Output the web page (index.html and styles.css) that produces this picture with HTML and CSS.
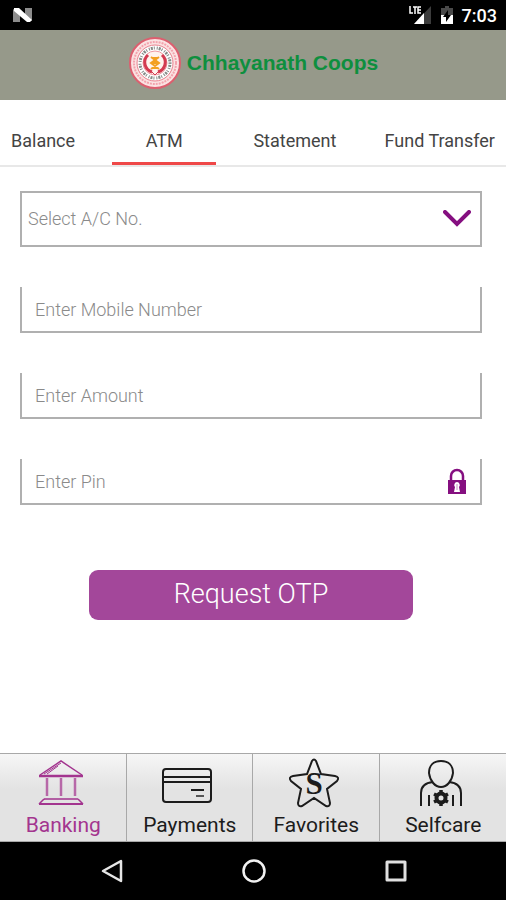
FILE: index.html
```html
<!DOCTYPE html>
<html lang="en">

<head>
    <meta charset="UTF-8">
    <meta name="viewport" content="width=device-width, initial-scale=1.0">
    <title>Chhayanath Coops</title>
    <link rel="stylesheet" href="styles.css">
</head>

<body>
    <div class="container">
        <div class="status">
            <svg width="20" height="16" viewBox="0 0 20 16">
                <path d="M0 2l7 5v8H0zM19 14l-7-5V1h7z" fill="#8c8c8c"/>
                <path d="M1 1h5l13 12-2 2h-3L1 4z" fill="#fff"/>
            </svg>
            <div class="status-right">
                <svg width="24" height="20" viewBox="0 0 24 20">
                    <path d="M23 1v18H6z" fill="#3c3c3c"/>
                    <path d="M16 8v11H6z" fill="#fff"/>
                    <path d="M2 1v7h3M5 2h4M7 2v7M13 2h-3v6h3M10 5h3" fill="none" stroke="#fff" stroke-width="1.5"/>
                </svg>
                <svg width="12" height="20" viewBox="0 0 12 20">
                    <path d="M4 1h4v2h4v8H0V3h4z" fill="#4a4a4a"/>
                    <path d="M0 10h12v9H0z" fill="#fff"/>
                    <path d="M7 5l-5 7h3v5l5-7H7z" fill="#000"/>
                </svg>
                <span class="clock">7:03</span>
            </div>
        </div>

        <header class="header">
            <svg class="logo" width="54" height="54" viewBox="0 0 54 54">
                <circle cx="27" cy="27" r="25" fill="#fbe3e3" stroke="#dc5f6f" stroke-width="2"/>
                <circle cx="27" cy="27" r="21" fill="none" stroke="#f3a3ad" stroke-width="2" stroke-dasharray="2 1"/>
                <circle cx="27" cy="27" r="18" fill="#fff" stroke="#e9808d" stroke-width="1"/>
                <circle cx="27" cy="27" r="15" fill="none" stroke="#848a87" stroke-width="3" stroke-dasharray="1 1 2 1 1 2"/>
                <circle cx="27" cy="27" r="12" fill="#fff3ee" stroke="#ee9aa4" stroke-width="1"/>
                <path d="M20 19a10 10 0 0 0 4 17M34 19a10 10 0 0 1-4 17" fill="none" stroke="#d33a50" stroke-width="3"/>
                <path d="M23 21l8 6-8 6M31 21l-8 6 8 6M24 22h6M23 27h8M24 32h6" fill="none" stroke="#f3a021" stroke-width="2"/>
                <path d="M24 36l3 3 3-3" fill="none" stroke="#d33a50" stroke-width="1"/>
            </svg>
            <h1 class="title">Chhayanath Coops</h1>
        </header>

        <nav class="tabs">
            <a class="tab" href="#balance">Balance</a>
            <a class="tab active" href="#atm">ATM</a>
            <a class="tab" href="#statement">Statement</a>
            <a class="tab" href="#transfer">Fund Transfer</a>
        </nav>

        <main class="content">
            <form class="form">
                <div class="field field-select">
                    <select aria-label="Select A/C No.">
                        <option>Select A/C No.</option>
                    </select>
                    <svg class="arrow" width="28" height="18" viewBox="0 0 28 18">
                        <path d="M2 2l12 12L26 2" fill="none" stroke="#850f80" stroke-width="4" stroke-linecap="round"/>
                    </svg>
                </div>
                <div class="field">
                    <input type="tel" placeholder="Enter Mobile Number" aria-label="Enter Mobile Number">
                </div>
                <div class="field">
                    <input type="text" placeholder="Enter Amount" aria-label="Enter Amount">
                </div>
                <div class="field">
                    <input type="password" placeholder="Enter Pin" aria-label="Enter Pin">
                    <svg width="18" height="26" viewBox="0 0 18 26">
                        <path d="M3 13V8a6 6 0 0 1 12 0v5" fill="none" stroke="#850f80" stroke-width="2.5"/>
                        <path d="M0 12h18v14H0z" fill="#850f80"/>
                        <path d="M9 14a3 3 0 0 0-2 5l-1 5h6l-1-5a3 3 0 0 0-2-5z" fill="#fff"/>
                        <path d="M9 16v6" stroke="#c68ac3" stroke-width="1"/>
                    </svg>
                </div>
                <button class="otp-btn" type="button">Request OTP</button>
            </form>
        </main>

        <nav class="menu">
            <a class="menu-item current" href="#banking">
                <svg width="50" height="50" viewBox="0 0 50 50" fill="none" stroke="currentColor">
                    <path d="M4 17L25 3l21 14" stroke-width="1.5"/>
                    <path d="M3 18h44" stroke-width="2.5"/>
                    <path d="M8 16L25 5M11 16l11-8" stroke-width="1"/>
                    <path d="M11 20v18M25 20v18M39 20v18" stroke-width="2.5" stroke="#b768a8"/>
                    <path d="M8 41h34M8 41l-5 5M42 41l5 5" stroke-width="1.5"/>
                    <path d="M3 46h44" stroke-width="2"/>
                </svg>
                <span>Banking</span>
            </a>
            <a class="menu-item" href="#payments">
                <svg width="50" height="50" viewBox="0 0 50 50" fill="none" stroke="currentColor" stroke-width="2">
                    <rect x="1" y="11" width="48" height="33" rx="3"/>
                    <path d="M1 19h48M1 24h48"/>
                    <path d="M29 32h13"/>
                    <path d="M34 38h8" stroke="#555"/>
                </svg>
                <span>Payments</span>
            </a>
            <a class="menu-item" href="#favorites">
                <svg width="50" height="50" viewBox="0 0 50 50">
                    <path d="M23 3Q25 0 27 3L32 16L46 18Q51 19 48 23L38 31L41 45Q41 49 37 48L25 40L13 48Q9 49 9 45L12 31L2 23Q-1 19 4 18L18 16Z" fill="none" stroke="currentColor" stroke-width="2"/>
                    <text class="star-letter" x="25" y="36" text-anchor="middle" fill="currentColor">S</text>
                </svg>
                <span>Favorites</span>
            </a>
            <a class="menu-item" href="#selfcare">
                <svg width="50" height="50" viewBox="0 0 50 50" fill="none" stroke="currentColor" stroke-width="2">
                    <path d="M25 3C17 3 13 8 13 15C14 23 19 29 25 29C31 29 36 23 37 15C37 8 33 3 25 3Z"/>
                    <path d="M17 24C8 25 5 29 5 35V48M33 24C42 25 45 29 45 35V48"/>
                    <path d="M13 37v11M37 37v11"/>
                    <circle cx="25" cy="40" r="4.5" stroke-width="4"/>
                    <path d="M25 32v4M25 44v4M18 36l4 2M28 42l4 2M18 44l4-2M28 38l4-2" stroke-width="3.5"/>
                </svg>
                <span>Selfcare</span>
            </a>
        </nav>

        <div class="softkeys">
            <button type="button" aria-label="Back">
                <svg width="24" height="26" viewBox="0 0 24 26">
                    <path d="M21 3v20L3 13z" fill="none" stroke="#e6e6e6" stroke-width="2.5" stroke-linejoin="round"/>
                </svg>
            </button>
            <button type="button" aria-label="Home">
                <svg width="24" height="24" viewBox="0 0 24 24">
                    <circle cx="12" cy="12" r="10.5" fill="none" stroke="#f2f2f2" stroke-width="2.5"/>
                </svg>
            </button>
            <button type="button" aria-label="Recent apps">
                <svg width="22" height="22" viewBox="0 0 22 22">
                    <rect x="2" y="2" width="18" height="18" fill="none" stroke="#e0e0e0" stroke-width="3" stroke-linejoin="round"/>
                </svg>
            </button>
        </div>
    </div>
</body>

</html>
```

FILE: styles.css
```css
* {
    box-sizing: border-box;
}
body{
    margin: 0;
    font-family: Roboto, "Liberation Sans", sans-serif;
    background-color: #fff;
}
a{
    color: inherit;
    text-decoration: none;
}
svg{
    display: block;
    flex-shrink: 0;
}
.container{
    min-height: 100vh;
    display: flex;
    flex-direction: column;
}

/* status bar */
.status{
    height: 30px;
    padding: 0 9px 0 13px;
    background-color: #000;
    display: flex;
    justify-content: space-between;
    align-items: center;
}
.status-right{
    display: flex;
    align-items: center;
    gap: 9px;
}
.clock{
    color: #fff;
    font-size: 18px;
    font-weight: 500;
}

.header{
    height: 70px;
    padding-bottom: 5px;
    background-color: #96998a;
    display: flex;
    justify-content: center;
    align-items: center;
    gap: 5px;
}
.title{
    margin: 0;
    color: #0e8f3e;
    font-family: "Liberation Sans", Arial, sans-serif;
    font-size: 21px;
    font-weight: bold;
}

/* tabs */
.tabs{
    height: 67px;
    border-bottom: 2px solid #e8e8e8;
    display: flex;
    justify-content: space-between;
}
.tab{
    padding: 18px 11px 0;
    border-bottom: 3px solid transparent;
    color: #444;
    font-size: 18px;
    display: flex;
    justify-content: center;
    align-items: center;
}
.tab.active{
    min-width: 104px;
    border-bottom-color: #ef4848;
}

/* form */
.content{
    flex: 1;
    padding: 24px 24px 24px 20px;
}
.form{
    display: flex;
    flex-direction: column;
    gap: 40px;
}
.field{
    height: 46px;
    padding: 0 14px 0 13px;
    border: 2px solid #b0b0b0;
    border-top: none;
    display: flex;
    align-items: center;
    position: relative;
}
.field input,
.field select{
    width: 100%;
    height: 100%;
    padding: 0;
    border: none;
    outline: none;
    background: none;
    color: #8a8a8a;
    font-family: inherit;
    font-size: 18px;
    font-weight: 300;
}
.field input::placeholder{
    color: #8a8a8a;
    opacity: 1;
}
.field-select{
    height: 56px;
    padding: 0;
    border-top: 2px solid #b0b0b0;
}
.field select{
    padding: 0 48px 2px 6px;
    appearance: none;
}
.arrow{
    position: absolute;
    right: 9px;
    pointer-events: none;
}
.otp-btn{
    width: 70%;
    height: 50px;
    margin: 25px auto 0;
    padding: 0 0 2px;
    border: none;
    border-radius: 9px;
    background-color: #a3479a;
    color: #fff;
    font-family: inherit;
    font-size: 27px;
    font-weight: 300;
    cursor: pointer;
}

/* bottom menu */
.menu{
    height: 89px;
    border-top: 1px solid #a8a8a8;
    border-bottom: 1px solid #a8a8a8;
    background: linear-gradient(#f6f6f6, #e3e3e3 40%, #e3e3e3);
    display: grid;
    grid-template-columns: repeat(4, 1fr);
}
.menu-item{
    padding: 4px 4px 0 0;
    border-right: 1px solid #a8a8a8;
    color: #1c1c1c;
    font-size: 21px;
    line-height: 24px;
    display: flex;
    flex-direction: column;
    align-items: center;
    gap: 5px;
}
.menu-item:last-child{
    border-right: none;
}
.menu-item.current{
    color: #a3358f;
}
.menu-item span{
    padding-left: 5px;
}
.star-letter{
    font-family: "Liberation Serif", serif;
    font-size: 31px;
    font-weight: bold;
}

.softkeys{
    height: 58px;
    padding: 0 39px 0 41px;
    background-color: #000;
    display: grid;
    grid-template-columns: repeat(3, 1fr);
    align-items: center;
    justify-items: center;
}
.softkeys button{
    padding: 0;
    border: none;
    background: none;
    cursor: pointer;
}
```
